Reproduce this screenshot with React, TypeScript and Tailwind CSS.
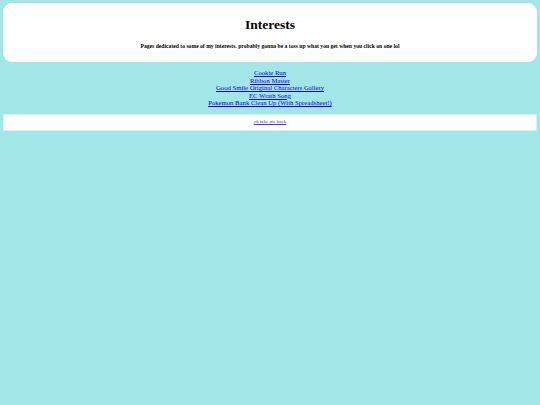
import React from "react";

export default function App() {
  const links = [
    "Cookie Run",
    "Ribbon Master",
    "Good Smile Original Characters Gallery",
    "EC Wrath Song",
    "Pokemon Bank Clean Up (With Spreadsheet!)",
  ];
  return (
    <div
      className="w-[540px] h-[405px] bg-[#a3e6e8] pt-[3px] px-[3px] overflow-hidden"
      style={{ fontFamily: '"Liberation Serif", "Times New Roman", serif' }}
    >
      <div className="bg-white rounded-[9px] h-[59px] flex flex-col items-center pt-[14px]">
        <h1 className="text-[13.5px] leading-[16px] font-bold text-black">Interests</h1>
        <p className="mt-[10px] text-[5.65px] leading-[7px] font-bold text-black">
          Pages dedicated to some of my interests. probably gonna be a toss up what you get when you click on one lol
        </p>
      </div>
      <div className="flex flex-col items-center pt-[7px] pb-[7px]">
        {links.map((l) => (
          <a key={l} href="#" className="text-[6.7px] leading-[7.5px] text-[#0000ee] underline">
            {l}
          </a>
        ))}
      </div>
      <div className="bg-white border border-[#d6f4f5] h-[17px] flex items-center justify-center">
        <a href="#" className="text-[5px] leading-[6px] text-[#4a3ae0] underline">
          ok take me back
        </a>
      </div>
    </div>
  );
}
